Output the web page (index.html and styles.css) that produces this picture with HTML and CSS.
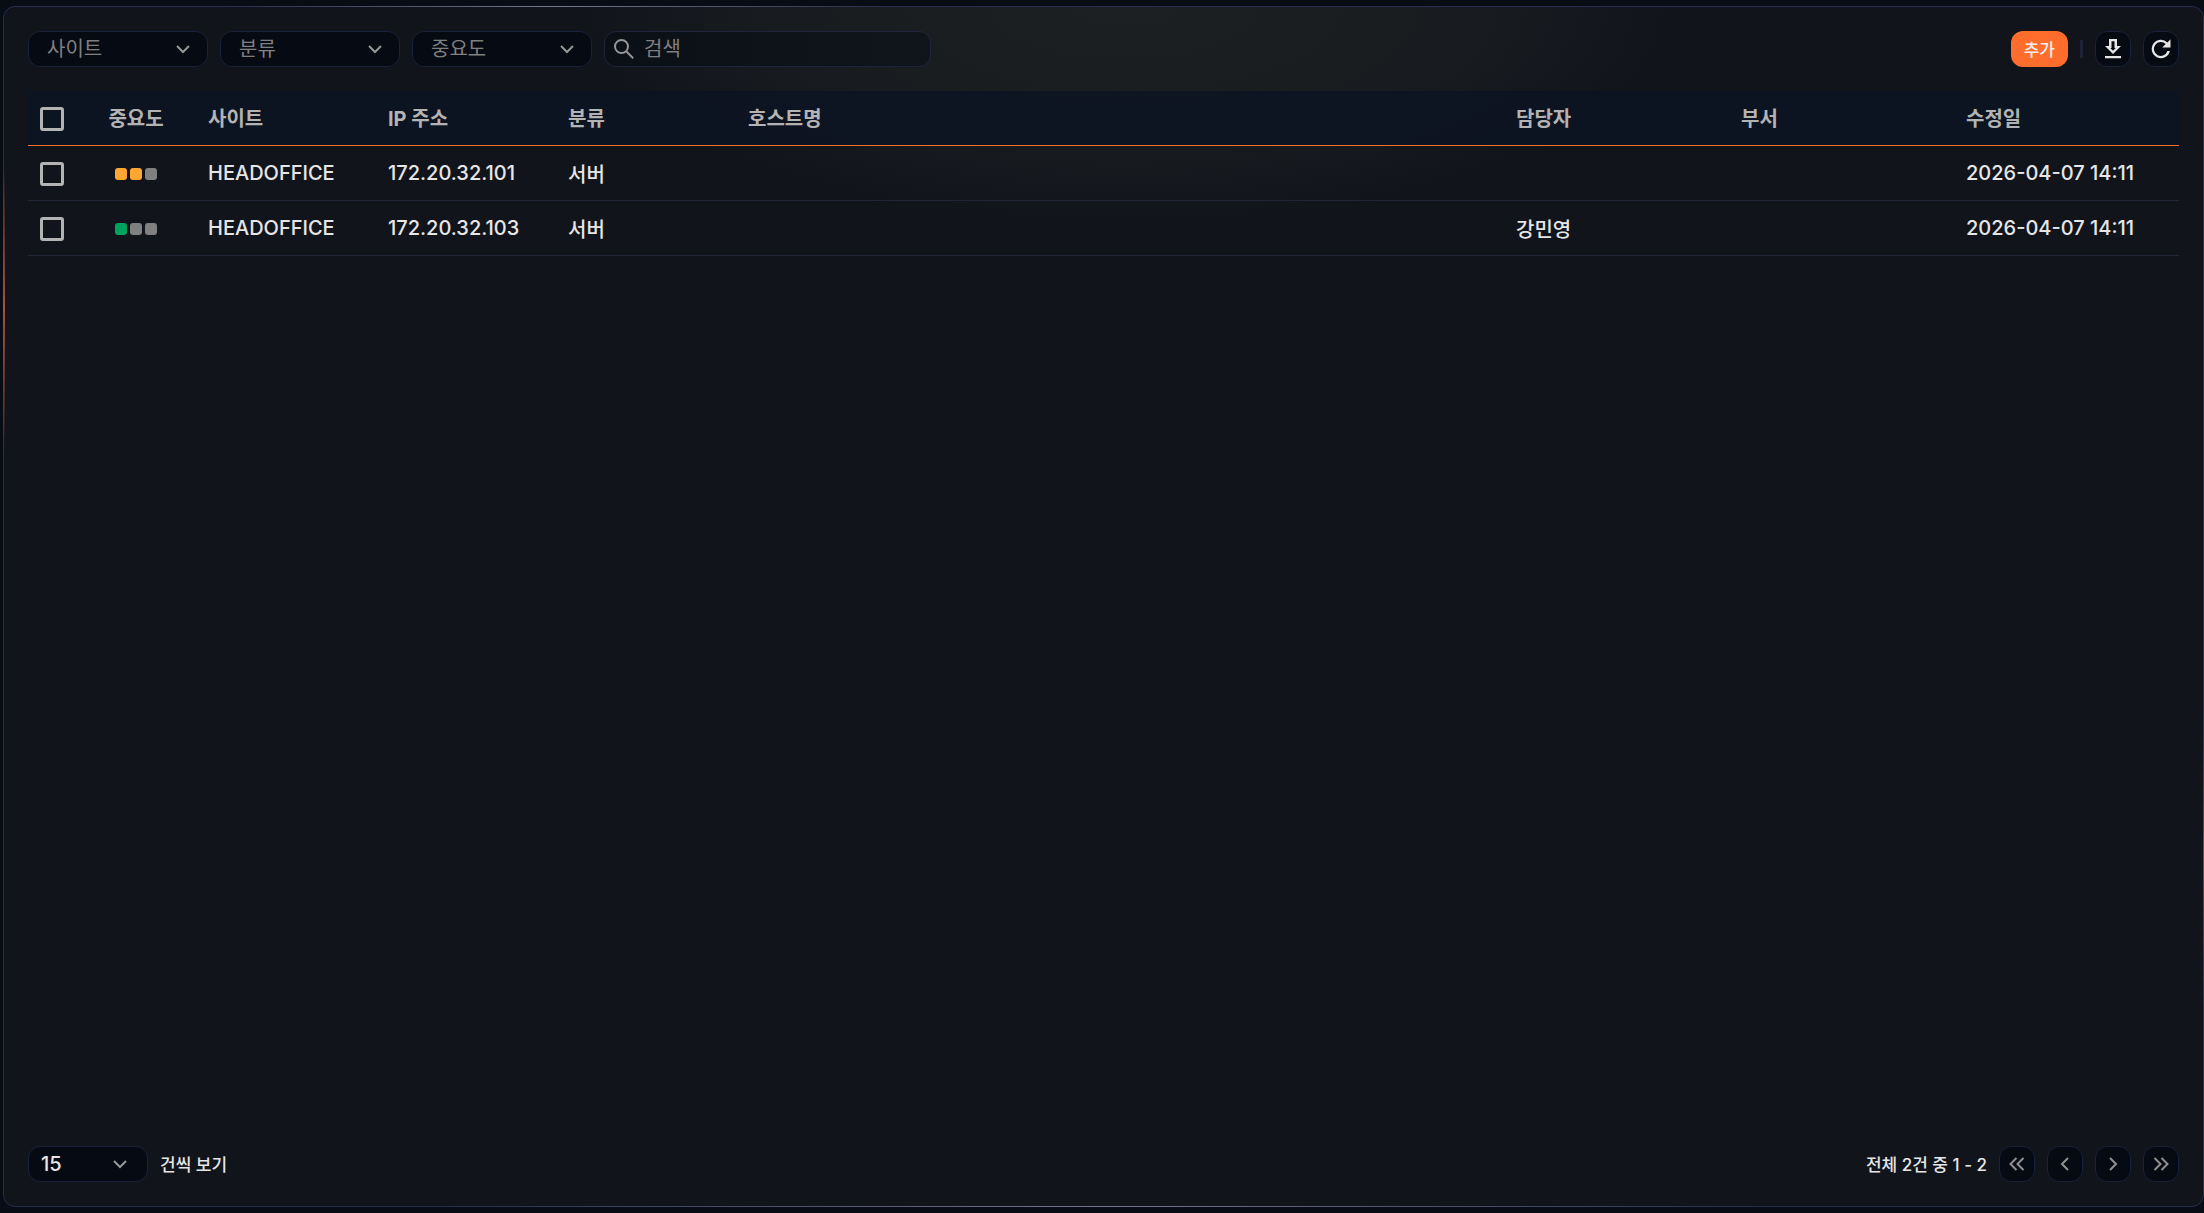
FILE: index.html
```html
<!DOCTYPE html>
<html lang="ko">
<head>
<meta charset="utf-8">
<title>자산 목록</title>
<link rel="stylesheet" href="styles.css">
</head>
<body>
<main class="panel">
    <!-- 테두리 빛 효과 -->
    <i class="glow glow-top"></i>
    <i class="glow glow-bottom"></i>
    <i class="glow glow-left"></i>
    <i class="glow glow-right"></i>

    <!-- 검색 조건 -->
    <div class="toolbar">
        <div class="filters">
            <div class="select-box">
                <select class="select" aria-label="사이트"><option>사이트</option></select>
                <svg class="arrow" viewBox="0 0 16 16"><path d="M2 5l6 6 6-6"/></svg>
            </div>
            <div class="select-box">
                <select class="select" aria-label="분류"><option>분류</option></select>
                <svg class="arrow" viewBox="0 0 16 16"><path d="M2 5l6 6 6-6"/></svg>
            </div>
            <div class="select-box">
                <select class="select" aria-label="중요도"><option>중요도</option></select>
                <svg class="arrow" viewBox="0 0 16 16"><path d="M2 5l6 6 6-6"/></svg>
            </div>
            <label class="search">
                <svg class="search-icon" viewBox="0 0 20 20"><circle cx="7.500" cy="7.500" r="6.500"/><path d="M12.200 12.200l7 7"/></svg>
                <input type="text" class="search-input" placeholder="검색" aria-label="검색">
            </label>
        </div>
        <div class="actions">
            <button type="button" class="btn-add">추가</button>
            <span class="bar"></span>
            <button type="button" class="btn-icon" aria-label="다운로드">
                <svg class="icon" viewBox="0 0 24 24"><path fill-rule="evenodd" d="M20 9h-4V2H8v7H4l8 8zM10.500 11V4.200h3V11h1.200L12 13.800 9.300 11zM4 19h16v2.300H4z"/></svg>
            </button>
            <button type="button" class="btn-icon" aria-label="새로고침">
                <svg class="icon" viewBox="0 0 24 24"><path d="M18.400 5.400A9.200 9.200 0 1 0 20.900 14h-2.500a6.900 6.900 0 1 1-1.700-6.900L13.200 10.500H21.500V2.300z"/></svg>
            </button>
        </div>
    </div>

    <!-- 목록 -->
    <div class="list">
        <table class="table">
            <colgroup>
                <col class="col-check">
                <col class="col-level">
                <col class="col-base">
                <col class="col-base">
                <col class="col-base">
                <col>
                <col class="col-wide">
                <col class="col-wide">
                <col class="col-wide">
            </colgroup>
            <thead>
                <tr>
                    <th><input type="checkbox" class="check" aria-label="전체 선택"></th>
                    <th class="center">중요도</th>
                    <th>사이트</th>
                    <th>IP 주소</th>
                    <th>분류</th>
                    <th>호스트명</th>
                    <th>담당자</th>
                    <th>부서</th>
                    <th>수정일</th>
                </tr>
            </thead>
            <tbody>
                <tr>
                    <td><input type="checkbox" class="check" aria-label="172.20.32.101 선택"></td>
                    <td><div class="level"><i class="dot mid"></i><i class="dot mid"></i><i class="dot"></i></div></td>
                    <td>HEADOFFICE</td>
                    <td>172.20.32.101</td>
                    <td>서버</td>
                    <td></td>
                    <td></td>
                    <td></td>
                    <td>2026-04-07 14:11</td>
                </tr>
                <tr>
                    <td><input type="checkbox" class="check" aria-label="172.20.32.103 선택"></td>
                    <td><div class="level"><i class="dot low"></i><i class="dot"></i><i class="dot"></i></div></td>
                    <td>HEADOFFICE</td>
                    <td>172.20.32.103</td>
                    <td>서버</td>
                    <td></td>
                    <td>강민영</td>
                    <td></td>
                    <td>2026-04-07 14:11</td>
                </tr>
            </tbody>
        </table>
    </div>

    <!-- 페이징 -->
    <div class="footer">
        <div class="page-size">
            <div class="select-box small">
                <select class="select" id="pageSize"><option>15</option></select>
                <svg class="arrow" viewBox="0 0 16 16"><path d="M2 5l6 6 6-6"/></svg>
            </div>
            <label class="text" for="pageSize">건씩 보기</label>
        </div>
        <div class="paging">
            <span class="text">전체 2건 중 1 - 2</span>
            <button type="button" class="btn-icon" aria-label="처음"><svg class="page-icon" viewBox="0 0 18 18"><path d="M8.500 3l-6 6 6 6M15.500 3l-6 6 6 6"/></svg></button>
            <button type="button" class="btn-icon" aria-label="이전"><svg class="page-icon" viewBox="0 0 18 18"><path d="M12 3L6 9l6 6"/></svg></button>
            <button type="button" class="btn-icon" aria-label="다음"><svg class="page-icon" viewBox="0 0 18 18"><path d="M6 3l6 6-6 6"/></svg></button>
            <button type="button" class="btn-icon" aria-label="마지막"><svg class="page-icon" viewBox="0 0 18 18"><path d="M2.500 3l6 6-6 6M9.500 3l6 6-6 6"/></svg></button>
        </div>
    </div>
</main>
</body>
</html>
```

FILE: styles.css
```css
*{
    box-sizing: border-box;
    margin: 0;
    padding: 0;
}
body{
    display: flex;
    min-height: 100vh;
    padding: 6px 0 6px 3px;
    background: #080c14;
    color: #e6e6e6;
    font-family: Inter, "Noto Sans CJK KR", sans-serif;
    font-size: 20px;
}
button, input, select{
    font: inherit;
    color: inherit;
}
/* 전체 패널 */
.panel{
    position: relative;
    flex: 1;
    display: flex;
    flex-direction: column;
    padding: 24px;
    border: 1px solid #262d50;
    border-radius: 12px;
    background: radial-gradient(560px 220px at 51% 0, #1d2022 0%, #1a1d20 50%, #11141b 100%) #11141b;
}
/* 테두리 빛 효과 */
.glow{
    position: absolute;
}
.glow-top{
    top: -1px;
    left: 10%;
    width: 30%;
    height: 1px;
    background: linear-gradient(90deg, transparent, #77748f, transparent);
}
.glow-bottom{
    bottom: -1px;
    left: 20%;
    width: 60%;
    height: 1px;
    background: linear-gradient(90deg, transparent, #77748f, transparent);
}
.glow-left{
    top: 13%;
    left: -1px;
    width: 2px;
    height: 24%;
    background: linear-gradient(transparent, #a9523a, transparent);
}
.glow-right{
    top: 58%;
    right: -1px;
    width: 1px;
    height: 26%;
    background: linear-gradient(transparent, #6b4a50, transparent);
}
/* 상단 */
.toolbar, .footer{
    display: flex;
    justify-content: space-between;
    align-items: center;
}
.filters, .actions, .page-size, .paging{
    display: flex;
    align-items: center;
    gap: 12px;
}
.select-box{
    position: relative;
    width: 180px;
}
.select{
    display: block;
    width: 100%;
    height: 36px;
    padding: 0 40px 0 18px;
    border: 1px solid #1a213a;
    border-radius: 12px;
    background: #060a12;
    color: #808080;
    appearance: none;
}
.arrow{
    position: absolute;
    top: 10px;
    right: 17px;
    width: 16px;
    height: 16px;
    fill: none;
    stroke: #969696;
    stroke-width: 2;
    pointer-events: none;
}
.search{
    display: flex;
    align-items: center;
    gap: 10px;
    width: 327px;
    height: 36px;
    padding: 0 9px;
    border: 1px solid #1f243c;
    border-radius: 12px;
    background: linear-gradient(90deg, #0b0f16, #10141b);
}
.search-icon{
    flex: none;
    width: 20px;
    height: 20px;
    fill: none;
    stroke: #969696;
    stroke-width: 2;
}
.search-input{
    flex: 1;
    min-width: 0;
    border: 0;
    outline: 0;
    background: transparent;
}
.search-input::placeholder{
    color: #808080;
}
.btn-add{
    height: 36px;
    padding: 0 13px 2px;
    border: 0;
    border-radius: 12px;
    background: #ff6d2d;
    color: #f4eeea;
    font-size: 17px;
    font-weight: 500;
}
.bar{
    width: 3px;
    height: 18px;
    background: #1e2434;
}
.btn-icon{
    display: flex;
    justify-content: center;
    align-items: center;
    width: 36px;
    height: 36px;
    border: 1px solid #1a213a;
    border-radius: 12px;
    background: #060a12;
}
.icon{
    width: 24px;
    height: 24px;
    fill: #e6e6e6;
}
.page-icon{
    width: 18px;
    height: 18px;
    fill: none;
    stroke: #909090;
    stroke-width: 2;
}
/* 목록 */
.list{
    flex: 1;
    padding-top: 24px;
}
.table{
    width: 100%;
    border-collapse: separate;
    border-spacing: 0;
    table-layout: fixed;
}
.table th, .table td{
    height: 55px;
    padding: 0 12px;
    border-bottom: 1px solid #222639;
    text-align: left;
    white-space: nowrap;
}
.table td{
    font-weight: 500;
}
.table th{
    padding-bottom: 2px;
    border-bottom-color: #ff6d2d;
    background: rgba(10, 18, 36, 0.7);
    color: #b3b3b3;
    font-weight: 700;
}
.table .center{
    text-align: center;
}
.col-check{
    width: 48px;
}
.col-level{
    width: 120px;
}
.col-base{
    width: 180px;
}
.col-wide{
    width: 225px;
}
.check{
    display: block;
    width: 24px;
    height: 24px;
    margin-top: 2px;
    border: 3px solid #b3b3b3;
    border-radius: 3px;
    appearance: none;
}
.table th .check{
    margin-top: 4px;
}
.level{
    display: flex;
    justify-content: center;
    gap: 3px;
    padding-top: 2px;
}
.dot{
    width: 12px;
    height: 12px;
    border-radius: 3px;
    background: #808080;
}
.dot.mid{
    background: #ffa633;
}
.dot.low{
    background: #00a35c;
}
/* 하단 */
.footer{
    font-size: 17px;
    font-weight: 500;
}
.footer .text{
    padding-bottom: 2px;
}
.small{
    width: 120px;
}
.small .select{
    padding-left: 12px;
    color: #e6e6e6;
    font-size: 20px;
}
.small .arrow{
    right: 20px;
}
```
